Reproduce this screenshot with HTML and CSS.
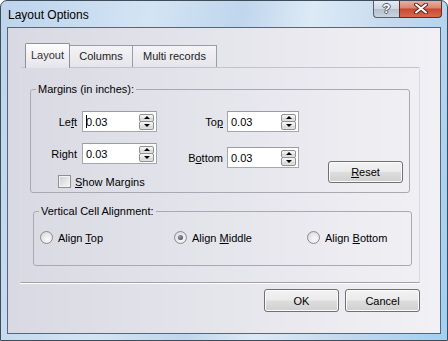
FILE: index.html
```html
<!DOCTYPE html>
<html lang="en">
<head>
    <meta charset="UTF-8">
    <title>Layout Options</title>
    <link rel="stylesheet" href="styles.css">
</head>
<body>
    <div class="window">
        <div class="titlebar">
            <span class="title">Layout Options</span>
            <div class="caption-buttons">
                <div class="cap-btn help">?</div>
                <div class="cap-btn close">
                    <svg width="14" height="11" viewBox="0 0 14 11">
                        <path d="M2 1.5 L12 9.5 M12 1.5 L2 9.5" stroke="#5a2a22" stroke-width="4" stroke-linecap="round"/>
                        <path d="M2 1.5 L12 9.5 M12 1.5 L2 9.5" stroke="#fff" stroke-width="2" stroke-linecap="round"/>
                    </svg>
                </div>
            </div>
        </div>

        <div class="client">
            <!-- Tabs -->
            <div class="tabs">
                <div class="tab active">Layout</div>
                <div class="tab tab-columns">Columns</div>
                <div class="tab tab-multi">Multi records</div>
            </div>

            <div class="panel">
                <fieldset class="group margins">
                    <legend>Margins (in inches):</legend>
                    <div class="margins-body">
                        <div class="col col-left">
                            <div class="field">
                                <label class="lbl">Le<u>f</u>t</label>
                                <div class="spin">
                                    <span class="value"><span class="caret"></span>0.03</span>
                                    <div class="spin-btns"><span class="up"></span><span class="down"></span></div>
                                </div>
                            </div>
                            <div class="field">
                                <label class="lbl">Ri<u>g</u>ht</label>
                                <div class="spin">
                                    <span class="value">0.03</span>
                                    <div class="spin-btns"><span class="up"></span><span class="down"></span></div>
                                </div>
                            </div>
                            <label class="check"><span class="checkbox"></span><span><u>S</u>how Margins</span></label>
                        </div>
                        <div class="col col-right">
                            <div class="field">
                                <label class="lbl">To<u>p</u></label>
                                <div class="spin">
                                    <span class="value">0.03</span>
                                    <div class="spin-btns"><span class="up"></span><span class="down"></span></div>
                                </div>
                            </div>
                            <div class="field">
                                <label class="lbl">B<u>o</u>ttom</label>
                                <div class="spin">
                                    <span class="value">0.03</span>
                                    <div class="spin-btns"><span class="up"></span><span class="down"></span></div>
                                </div>
                            </div>
                        </div>
                        <button class="btn reset"><u>R</u>eset</button>
                    </div>
                </fieldset>

                <fieldset class="group valign">
                    <legend>Vertical Cell Alignment:</legend>
                    <div class="radios">
                        <label class="radio"><span class="dot"></span><span>Align <u>T</u>op</span></label>
                        <label class="radio"><span class="dot checked"></span><span>Align <u>M</u>iddle</span></label>
                        <label class="radio"><span class="dot"></span><span>Align <u>B</u>ottom</span></label>
                    </div>
                </fieldset>
            </div>

            <div class="buttons">
                <button class="btn">OK</button>
                <button class="btn">Cancel</button>
            </div>
        </div>
    </div>
</body>
</html>
```

FILE: styles.css
```css
* {
    margin: 0;
    padding: 0;
    box-sizing: border-box;
}

body {
    font-family: 'Liberation Sans', Arial, sans-serif;
    font-size: 11px;
    color: #000;
    background: #fff;
}

.window {
    width: 448px;
    height: 341px;
    border: 1px solid #3f4c5a;
    border-radius: 7px 7px 0 0;
    background: linear-gradient(100deg, #bdd4ec 0%, #d3e4f4 30%, #c0d6ed 48%, #dceaf6 62%, #c3d8ee 80%, #9fd0f3 100%);
    overflow: hidden;
}

/* Title bar */
.titlebar {
    height: 26px;
    display: flex;
    align-items: flex-start;
}

.title {
    font-size: 12px;
    line-height: 14px;
    margin: 7px 0 0 7px;
    color: #000;
}

.caption-buttons {
    display: flex;
    margin: -1px 5px 0 auto;
}

.cap-btn {
    height: 18px;
    display: flex;
    align-items: center;
    justify-content: center;
    border: 1px solid #58606c;
    border-top: none;
}

.help {
    width: 26px;
    border-right: none;
    border-radius: 0 0 0 4px;
    background: linear-gradient(#e9eef5 0%, #cfd7e2 50%, #b3bfcd 52%, #c9d4e0 100%);
    color: #fff;
    font-size: 13px;
    font-weight: bold;
    text-shadow: 1px 0 0 #505a66, -1px 0 0 #505a66, 0 1px 0 #505a66, 0 -1px 0 #505a66;
}

.close {
    width: 43px;
    border-color: #6b2a1f;
    border-radius: 0 0 4px 0;
    background: linear-gradient(#eab4a6 0%, #d98470 48%, #c8482e 52%, #d8694e 100%);
}

/* Client area */
.client {
    width: 434px;
    height: 307px;
    margin: 0 6px;
    border: 1px solid #56677a;
    background: linear-gradient(to right, #d9d9e3, #f1f1f5);
    padding: 15px 0 0 12px;
}

.tabs {
    display: flex;
    align-items: flex-end;
    height: 24px;
    margin-left: 5px;
    position: relative;
    z-index: 1;
}

.tab {
    height: 22px;
    display: flex;
    align-items: center;
    justify-content: center;
    padding-bottom: 1px;
    border-top: 1px solid #9b9ca4;
    border-right: 1px solid #9b9ca4;
    background: linear-gradient(#f4f4f7, #e4e4ea);
    color: #222;
}

.tab.active {
    width: 45px;
    height: 25px;
    margin-bottom: -1px;
    padding-bottom: 3px;
    border-left: 1px solid #8e8f97;
    border-top-color: #8e8f97;
    border-right-color: #8e8f97;
    border-radius: 2px 2px 0 0;
    background: linear-gradient(#fdfdfe, #e4e4ec);
    color: #333;
}

.tab-columns {
    width: 63px;
}

.tab-multi {
    width: 84px;
}

.panel {
    width: 400px;
    height: 216px;
    border: 1px solid #dcdce4;
    border-top-color: #c3c3cc;
    border-bottom-color: #a0a0a6;
    border-radius: 0 2px 0 0;
    box-shadow: 0 1px 0 #fff;
    padding-top: 15px;
}

/* Group boxes */
.group {
    border: 1px solid #a9a9b2;
    border-radius: 3px;
    min-width: 0;
}

.group legend {
    margin-left: 5px;
    padding: 0 2px;
    line-height: 13px;
}

.margins {
    width: 380px;
    margin-left: 9px;
}

.margins-body {
    display: flex;
    padding: 15px 6px 4px 0;
}

.col {
    display: flex;
    flex-direction: column;
}

.col-left {
    gap: 11px;
}

.col-right {
    gap: 15px;
    margin-left: 16px;
}

.field {
    display: flex;
    align-items: center;
}

.lbl {
    text-align: right;
}

.col-left .lbl {
    width: 46px;
    margin-right: 5px;
}

.col-right .lbl {
    width: 50px;
    margin-right: 4px;
}

.spin {
    height: 21px;
    display: flex;
    align-items: center;
    background: #fff;
    border: 1px solid #a5a7ad;
    border-top-color: #9a9ca3;
    padding: 0 2px 0 3px;
}

.col-left .spin {
    width: 75px;
}

.col-right .spin {
    width: 72px;
}

.value {
    flex: 1;
    color: #000;
    display: flex;
    align-items: center;
}

.caret {
    display: inline-block;
    width: 1px;
    height: 13px;
    background: #000;
    margin-right: -1px;
}

.spin-btns {
    width: 15px;
    height: 16px;
    display: flex;
    flex-direction: column;
}

.spin-btns span {
    flex: 1;
    border: 1px solid #8f9195;
    border-radius: 2px;
    background: linear-gradient(#f6f6f6 0%, #e8e8e8 50%, #d6d6d6 51%, #e2e2e2 100%);
    display: flex;
    align-items: center;
    justify-content: center;
}

.spin-btns .down {
    margin-top: -1px;
}

.spin-btns .up::after,
.spin-btns .down::after {
    content: "";
    border-left: 3px solid transparent;
    border-right: 3px solid transparent;
}

.spin-btns .up::after {
    border-bottom: 3px solid #000;
}

.spin-btns .down::after {
    border-top: 3px solid #000;
}

.check {
    display: flex;
    align-items: center;
    gap: 4px;
    margin-left: 27px;
    height: 13px;
}

.checkbox {
    width: 13px;
    height: 13px;
    border: 1px solid #8e8f8f;
    background: linear-gradient(135deg, #cbcfd5, #f7f7f7);
    box-shadow: inset 0 0 0 1px #f4f4f4;
}

/* Buttons */
.btn {
    font-family: inherit;
    font-size: 11px;
    color: #000;
    height: 23px;
    width: 75px;
    border: 1px solid #707070;
    border-radius: 3px;
    background: linear-gradient(#f2f2f2 0%, #ebebeb 48%, #dddddd 52%, #cfcfcf 100%);
    box-shadow: inset 0 0 0 1px #fbfbfb;
}

.reset {
    height: 22px;
    margin: 0 0 5px auto;
    align-self: flex-end;
}

.valign {
    width: 379px;
    margin: 12px 0 0 12px;
}

.radios {
    display: grid;
    grid-template-columns: 134px 133px auto;
    padding: 13px 0 21px 6px;
}

.radio {
    display: flex;
    align-items: center;
    gap: 5px;
    height: 13px;
}

.dot {
    width: 13px;
    height: 13px;
    border-radius: 50%;
    border: 1px solid #8b8c8e;
    background: radial-gradient(circle at 60% 65%, #fafafa 0%, #e4e6ea 55%, #c9cdd3 100%);
    display: flex;
    align-items: center;
    justify-content: center;
}

.dot.checked::after {
    content: "";
    width: 5px;
    height: 5px;
    border-radius: 50%;
    background: radial-gradient(circle at 40% 35%, #9aa4b0, #2b3440);
}

.buttons {
    display: flex;
    justify-content: flex-end;
    gap: 6px;
    margin-top: 6px;
    padding-right: 20px;
}
```
